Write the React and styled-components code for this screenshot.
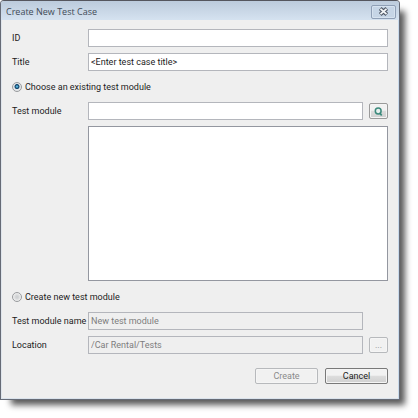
import React, { useState } from "react";
import styled, { createGlobalStyle } from "styled-components";

const GlobalStyle = createGlobalStyle`
  * { box-sizing: border-box; }
  body {
    margin: 0;
    background: #ffffff;
    color: #1c1c1c;
    font: 9px/12px Roboto, "Liberation Sans", sans-serif;
  }
`;

const Dialog = styled.main`
  margin: 0 18px 18px 0;
  border: 1px solid #666b76;
  border-top-color: #55565e;
  border-radius: 4px 4px 0 0;
  background: #efefef;
  box-shadow: inset -1px 0 #c9daec, inset 1px 0 #dfe5ec, inset 0 -1px #dbe3ec,
    8px 8px 6px -3px rgba(0, 0, 0, 0.65);
`;

const TitleBar = styled.header`
  display: flex;
  align-items: center;
  justify-content: space-between;
  height: 19px;
  padding: 2px 3px 0 5px;
  border-radius: 3px 3px 0 0;
  background: linear-gradient(#bccbdc, #d5e2f0);
`;

const Heading = styled.h1`
  margin: 0;
  color: #414b57;
  font: 9px/14px "Open Sans", "Noto Sans", sans-serif;
`;

const CloseButton = styled.button`
  display: flex;
  align-items: center;
  justify-content: center;
  width: 25px;
  height: 14px;
  padding: 0;
  border: 1px solid #8f9fb6;
  border-radius: 2px;
  background: #c6d5e6;
  box-shadow: inset 0 0 0 1px #d6e2ef;
`;

const Form = styled.form`
  display: flex;
  flex-direction: column;
  gap: 6px;
  padding: 9px 11px 15px;
`;

const Row = styled.div`
  display: grid;
  grid-template-columns: 70px minmax(0, 1fr) ${(p) => (p.$action ? "19px" : "")};
  align-items: center;
  column-gap: 6px;
`;

const Label = styled.label`
  white-space: nowrap;
`;

const TextField = styled.input`
  width: 100%;
  height: 18px;
  padding: 0 2px;
  border: 1px solid #b4b6bc;
  border-radius: 0;
  outline: none;
  background: #ffffff;
  color: inherit;
  font: inherit;

  &:disabled {
    background: #efefef;
    color: #7d7d7d;
  }
`;

const ModuleList = styled.select`
  grid-column: 2;
  width: 100%;
  height: 155px;
  border: 1px solid #9497a0;
  border-radius: 0;
  outline: none;
  background: #ffffff;
  font: inherit;
`;

const Choice = styled.label`
  display: flex;
  align-items: center;
  gap: 3px;
  height: 19px;
`;

const Radio = styled.input`
  appearance: none;
  width: 10px;
  height: 10px;
  margin: 0;
  border: 1px solid #999b9e;
  border-radius: 50%;
  background: radial-gradient(circle, #cfd1d3 0 20%, #f0f0f0 70%);

  &:checked {
    background: radial-gradient(circle at 50% 45%, #58b5dc 0 8%, #174a72 30% 36%, #e4e6e8 48%);
  }
`;

const Button = styled.button`
  display: flex;
  align-items: center;
  justify-content: center;
  width: ${(p) => (p.$compact ? "19px" : "63px")};
  height: 16px;
  padding: 0;
  border: 1px solid #797979;
  border-radius: 2px;
  background: linear-gradient(#f2f2f2 0 45%, #dddddd 50%, #d0d0d0);
  box-shadow: inset 0 0 0 1px #f5f5f5;
  color: inherit;
  font: inherit;

  &:disabled {
    border-color: #b7b9bc;
    background: #f1f1f1;
    color: #8a8a8a;
  }
`;

const IconButton = styled(Button)`
  border-color: #9a9a9a;
`;

const Footer = styled.footer`
  display: flex;
  justify-content: flex-end;
  gap: 7px;
  padding-top: 8px;
`;

function CloseIcon() {
  return (
    <svg width="11" height="9" viewBox="0 0 11 9" aria-hidden="true">
      <path d="M2.2 1.6 L8.8 7.4 M8.8 1.6 L2.2 7.4" stroke="#4f5866" strokeWidth="4" />
      <path d="M2.5 1.9 L8.5 7.1 M8.5 1.9 L2.5 7.1" stroke="#f4f6f8" strokeWidth="1.9" />
    </svg>
  );
}

function SearchIcon() {
  return (
    <svg width="11" height="11" viewBox="0 0 11 11" aria-hidden="true">
      <circle cx="5.2" cy="5" r="2.9" fill="#e8f0ee" stroke="#3c8a7c" strokeWidth="1.5" />
      <path d="M6.8 7 L8.7 9.6" stroke="#3c8a7c" strokeWidth="1.7" />
    </svg>
  );
}

export default function App() {
  const [mode, setMode] = useState("existing");
  const creating = mode === "new";

  return (
    <>
      <GlobalStyle />
      <Dialog role="dialog" aria-labelledby="heading">
        <TitleBar>
          <Heading id="heading">Create New Test Case</Heading>
          <CloseButton type="button" aria-label="Close">
            <CloseIcon />
          </CloseButton>
        </TitleBar>
        <Form onSubmit={(e) => e.preventDefault()}>
          <Row>
            <Label htmlFor="case-id">ID</Label>
            <TextField id="case-id" />
          </Row>
          <Row>
            <Label htmlFor="case-title">Title</Label>
            <TextField id="case-title" defaultValue="<Enter test case title>" />
          </Row>
          <Choice>
            <Radio type="radio" name="mode" checked={!creating} onChange={() => setMode("existing")} />
            Choose an existing test module
          </Choice>
          <Row $action>
            <Label htmlFor="module">Test module</Label>
            <TextField id="module" disabled={creating} />
            <IconButton type="button" $compact aria-label="Search" disabled={creating}>
              <SearchIcon />
            </IconButton>
          </Row>
          <Row>
            <ModuleList size={10} aria-label="Existing test modules" disabled={creating} />
          </Row>
          <Choice>
            <Radio type="radio" name="mode" checked={creating} onChange={() => setMode("new")} />
            Create new test module
          </Choice>
          <Row $action>
            <Label htmlFor="module-name">Test module name</Label>
            <TextField id="module-name" defaultValue="New test module" disabled={!creating} />
          </Row>
          <Row $action>
            <Label htmlFor="location">Location</Label>
            <TextField id="location" defaultValue="/Car Rental/Tests" disabled={!creating} />
            <Button type="button" $compact aria-label="Browse" disabled={!creating}>
              ...
            </Button>
          </Row>
          <Footer>
            <Button type="submit" disabled>Create</Button>
            <Button type="button">Cancel</Button>
          </Footer>
        </Form>
      </Dialog>
    </>
  );
}
